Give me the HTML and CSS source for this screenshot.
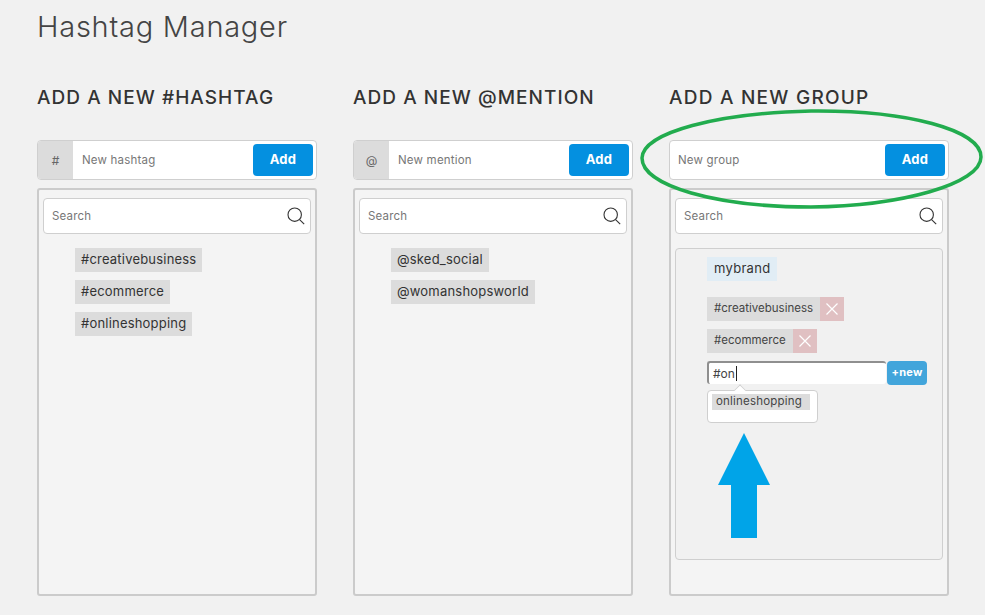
FILE: index.html
```html
<!DOCTYPE html>
<html lang="en">
<head>
<meta charset="utf-8">
<title>Hashtag Manager</title>
<link rel="stylesheet" href="styles.css">
</head>
<body>
<main class="page">
  <h1 class="title">Hashtag Manager</h1>
  <div class="columns">
    <section class="column">
      <h2 class="heading">ADD A NEW #HASHTAG</h2>
      <form class="add-row">
        <span class="prefix">#</span>
        <input class="add-input" placeholder="New hashtag">
        <button class="add-btn" type="button">Add</button>
      </form>
      <div class="panel">
        <div class="search">
          <input class="search-input" placeholder="Search">
          <svg class="search-icon" viewBox="0 0 18 18"><circle cx="7.7" cy="7.7" r="6.7"/><path d="M12.6 12.6 17.2 17.2"/></svg>
        </div>
        <ul class="tags">
          <li class="tag">#creativebusiness</li>
          <li class="tag">#ecommerce</li>
          <li class="tag">#onlineshopping</li>
        </ul>
      </div>
    </section>
    <section class="column">
      <h2 class="heading">ADD A NEW @MENTION</h2>
      <form class="add-row">
        <span class="prefix">@</span>
        <input class="add-input" placeholder="New mention">
        <button class="add-btn" type="button">Add</button>
      </form>
      <div class="panel">
        <div class="search">
          <input class="search-input" placeholder="Search">
          <svg class="search-icon" viewBox="0 0 18 18"><circle cx="7.7" cy="7.7" r="6.7"/><path d="M12.6 12.6 17.2 17.2"/></svg>
        </div>
        <ul class="tags">
          <li class="tag">@sked_social</li>
          <li class="tag">@womanshopsworld</li>
        </ul>
      </div>
    </section>
    <section class="column">
      <h2 class="heading heading-group">ADD A NEW GROUP</h2>
      <form class="add-row">
        <input class="add-input add-input-solo" placeholder="New group">
        <button class="add-btn" type="button">Add</button>
      </form>
      <div class="panel">
        <div class="search">
          <input class="search-input" placeholder="Search">
          <svg class="search-icon" viewBox="0 0 18 18"><circle cx="7.7" cy="7.7" r="6.7"/><path d="M12.6 12.6 17.2 17.2"/></svg>
        </div>
        <div class="group">
          <div class="group-name">mybrand</div>
          <ul class="group-tags">
            <li class="group-tag"><span class="group-tag-text">#creativebusiness</span><span class="remove"><svg viewBox="0 0 12 12"><path d="M0.5 0.5 11.5 11.5M11.5 0.5 0.5 11.5"/></svg></span></li>
            <li class="group-tag"><span class="group-tag-text">#ecommerce</span><span class="remove"><svg viewBox="0 0 12 12"><path d="M0.5 0.5 11.5 11.5M11.5 0.5 0.5 11.5"/></svg></span></li>
          </ul>
          <div class="new-row">
            <div class="new-input"><span>#on</span><span class="caret"></span></div>
            <button class="new-btn" type="button">+new</button>
          </div>
          <div class="suggest">
            <div class="suggest-item">onlineshopping</div>
          </div>
        </div>
      </div>
    </section>
  </div>
  <svg class="ring" viewBox="0 0 345 102"><path d="M3 50C4 24 80 5 172 3 268 2 342 22 342 49 342 76 262 98 172 99 78 99 3 78 3 50Z"/></svg>
  <svg class="arrow" viewBox="0 0 52 105"><path d="M26 0 52 52H39V105H13V52H0Z"/></svg>
</main>
</body>
</html>
```
FILE: styles.css
```css
* { box-sizing: border-box; }
html, body { margin: 0; padding: 0; }
body {
  background: #f1f1f1;
  color: #333;
  font-family: Inter, "Liberation Sans", sans-serif;
  width: 985px;
  height: 615px;
  overflow: hidden;
}
ul { list-style: none; margin: 0; padding: 0; }
.page { position: relative; padding: 0 37px; height: 615px; }
.title {
  margin: 0;
  padding-top: 9px;
  height: 81px;
  font-size: 29px;
  line-height: 36px;
  font-weight: 300;
  color: #444;
  letter-spacing: 0.75px;
}
.columns { display: flex; gap: 36px; }
.column { width: 280px; flex: none; }
.heading {
  margin: 0;
  height: 59px;
  padding-top: 5px;
  font-size: 19px;
  line-height: 24px;
  font-weight: 500;
  color: #333;
  letter-spacing: 1.05px;
  white-space: nowrap;
}
.heading-group { letter-spacing: 1.25px; }
.add-row {
  display: flex;
  align-items: center;
  height: 40px;
  margin: 0 0 8px;
  background: #fff;
  border: 1px solid #cfcfcf;
  border-radius: 4px;
  overflow: hidden;
}
.prefix {
  flex: none;
  width: 35px;
  height: 100%;
  display: flex;
  align-items: center;
  justify-content: center;
  background: #dcdcdc;
  color: #666;
  font-size: 12px;
}
.add-input, .search-input {
  flex: 1;
  min-width: 0;
  border: 0;
  outline: 0;
  background: transparent;
  font-family: inherit;
  font-size: 11.5px;
  letter-spacing: 0.2px;
  padding: 0 0 0 9px;
  color: #555;
}
.add-input-solo { padding-left: 8px; }
.add-input::placeholder, .search-input::placeholder { color: #777; opacity: 1; }
.add-btn {
  flex: none;
  width: 60px;
  height: 32px;
  margin-right: 3px;
  padding: 0 0 2px;
  border: 0;
  border-radius: 4px;
  background: #0490e0;
  color: #fff;
  font-family: inherit;
  font-size: 13px;
  font-weight: 700;
  letter-spacing: 0.3px;
}
.panel {
  height: 408px;
  padding: 8px 4px;
  background: #f4f4f4;
  border: 2px solid #cbcbcb;
  border-radius: 3px;
}
.search {
  display: flex;
  align-items: center;
  height: 36px;
  background: #fff;
  border: 1px solid #cfcfcf;
  border-radius: 4px;
  padding-right: 5px;
}
.search-input { padding-left: 8px; }
.search-icon {
  width: 18px;
  height: 18px;
  flex: none;
  fill: none;
  stroke: #333;
  stroke-width: 1.1;
}
.tags {
  display: flex;
  flex-direction: column;
  align-items: flex-start;
  gap: 8px;
  margin-top: 14px;
  padding-left: 32px;
}
.tag {
  height: 24px;
  line-height: 22px;
  padding: 0 6px;
  background: #dcdcdc;
  font-size: 13px;
  letter-spacing: 0.2px;
  color: #333;
}
.group {
  height: 312px;
  margin-top: 14px;
  padding: 8px 0 0 31px;
  background: #f1f1f1;
  border: 1px solid #cfcfcf;
  border-radius: 4px;
}
.group-name {
  display: inline-block;
  height: 24px;
  line-height: 22px;
  padding: 0 7px;
  background: #e1edf5;
  font-size: 13px;
  letter-spacing: 0.3px;
  color: #333;
  vertical-align: top;
}
.group-tags {
  display: flex;
  flex-direction: column;
  align-items: flex-start;
  gap: 8px;
  margin-top: 16px;
}
.group-tag { display: flex; height: 24px; }
.group-tag-text {
  line-height: 22px;
  padding: 0 7px;
  background: #dcdcdc;
  font-size: 11.5px;
  color: #444;
}
.remove {
  width: 24px;
  display: flex;
  align-items: center;
  justify-content: center;
  background: #e0c0c2;
}
.remove svg { width: 12px; height: 12px; fill: none; stroke: #fff; stroke-width: 1.2; }
.new-row { display: flex; gap: 1px; margin-top: 8px; height: 24px; }
.new-input {
  width: 179px;
  height: 23px;
  display: flex;
  align-items: center;
  padding-left: 4px;
  background: #fff;
  border-top: 2px solid #8f8f8f;
  border-left: 2px solid #8f8f8f;
  border-radius: 3px;
  font-size: 12px;
  color: #444;
}
.caret { width: 1px; height: 15px; background: #222; margin-left: 1px; }
.new-btn {
  width: 40px;
  height: 24px;
  padding: 0 0 2px;
  border: 0;
  border-radius: 4px;
  background: #42a5db;
  color: #fff;
  font-family: inherit;
  font-size: 11px;
  font-weight: 700;
  letter-spacing: 0.2px;
}
.suggest {
  position: relative;
  width: 111px;
  height: 33px;
  margin-top: 5px;
  padding: 3px 7px 0 4px;
  background: #fff;
  border: 1px solid #cfcfcf;
  border-radius: 4px;
}
.suggest::before {
  content: "";
  position: absolute;
  left: 27px;
  top: -6px;
  width: 9px;
  height: 9px;
  background: #fff;
  border-top: 1px solid #cfcfcf;
  border-left: 1px solid #cfcfcf;
  transform: rotate(45deg) scale(.8);
}
.suggest-item {
  position: relative;
  height: 16px;
  line-height: 14px;
  padding: 0 4px;
  background: #dcdcdc;
  font-size: 11.5px;
  letter-spacing: 0.2px;
  color: #444;
}
.ring {
  position: absolute;
  left: 639px;
  top: 108px;
  width: 345px;
  height: 102px;
  fill: none;
  stroke: #22ac4e;
  stroke-width: 3.5;
}
.arrow {
  position: absolute;
  left: 718px;
  top: 433px;
  width: 52px;
  height: 105px;
  fill: #00a4e8;
}
```
